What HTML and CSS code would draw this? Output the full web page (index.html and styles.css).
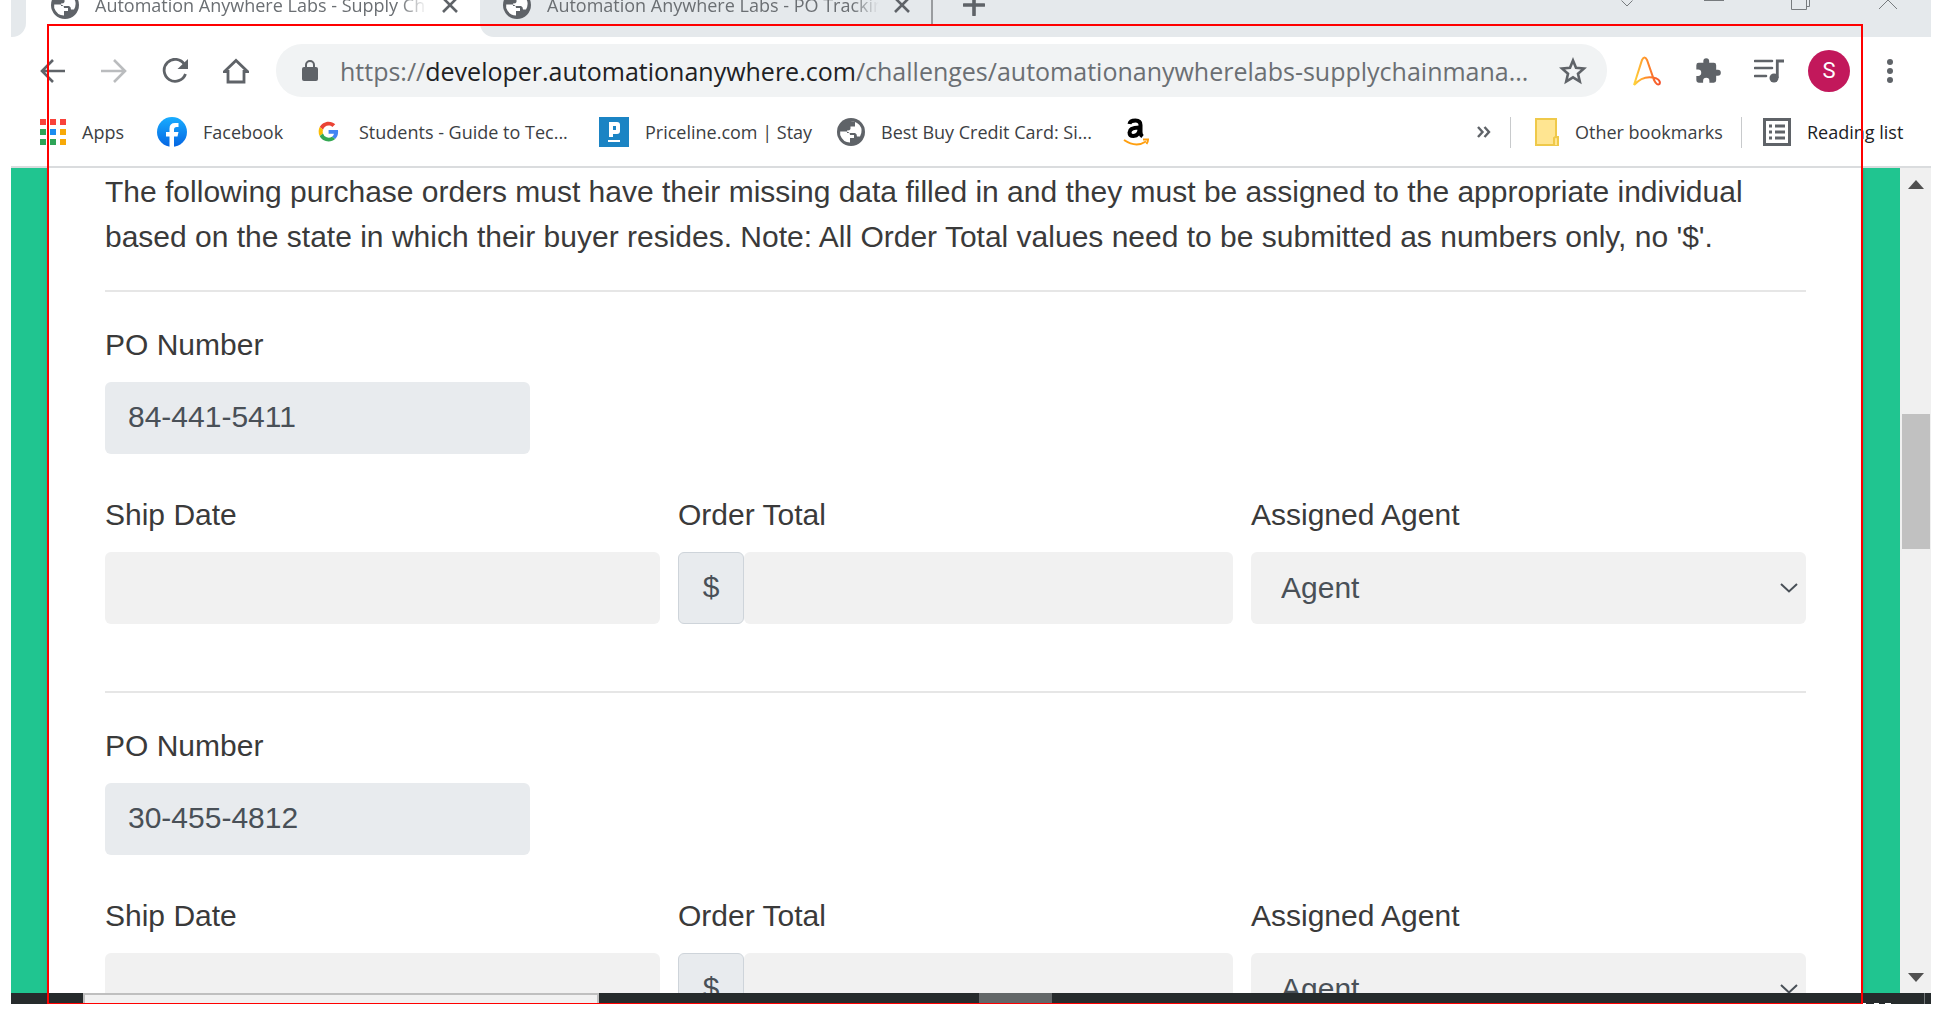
FILE: index.html
```html
<!DOCTYPE html>
<html lang="en">
<head>
<meta charset="utf-8">
<title>Automation Anywhere Labs - Supply Chain</title>
<link rel="stylesheet" href="styles.css">
</head>
<body>
<svg class="defs" aria-hidden="true">
  <symbol id="globe" viewBox="0 0 28 28"><circle cx="14" cy="14" r="14" fill="#5f6368"/><path d="M13 3.500Q8 4 5 8.500L9 9 12 12H16L18 9V7L15 6ZM3.200 13Q3 19 7 22.500 12 26 18 24L19 20Q21 16 17 15.500L16 18H12L9 15.500 3.200 13Z" fill="none"/><path d="M3.200 13.500H9Q13 13.500 13 17H17V20H13V24.500Q6 24.500 3.200 17ZM13.500 3.200 18 4V8.500H13.500V11Q13 12.500 10 12.500V15H18Q20 15.500 20 18.500H23Q26.500 12 22.500 7Q19 3 13.500 3.200Z" fill="#fff"/></symbol>
  <symbol id="cross" viewBox="0 0 16 16"><path d="M1 1 15 15M15 1 1 15" stroke="#5f6368" stroke-width="2.600" fill="none"/></symbol>
</svg>
<div class="screen">
  <header class="tabstrip">
    <div class="tabs">
      <div class="tab-edge"></div>
      <div class="tab active">
        <svg class="globe"><use href="#globe"/></svg>
        <span class="tab-title">Automation Anywhere Labs - Supply Ch</span>
        <button class="icon-btn" aria-label="Close tab"><svg width="16" height="16"><use href="#cross"/></svg></button>
      </div>
      <div class="tab">
        <svg class="globe"><use href="#globe"/></svg>
        <span class="tab-title">Automation Anywhere Labs - PO Trackin</span>
        <button class="icon-btn" aria-label="Close tab"><svg width="16" height="16"><use href="#cross"/></svg></button>
      </div>
      <button class="icon-btn new-tab" aria-label="New tab"><svg width="22" height="22" viewBox="0 0 22 22"><path d="M11 1V21M1 11H21" stroke="#5f6368" stroke-width="3.600" stroke-linecap="round"/></svg></button>
      <div class="window-controls">
        <button class="icon-btn" aria-label="Search tabs"><svg width="20" height="20" viewBox="0 0 20 20"><path d="M4.500 5.500 10 11 15.500 5.500" fill="none" stroke="#777b7e"/></svg></button>
        <button class="icon-btn" aria-label="Minimize"><svg width="20" height="20" viewBox="0 0 20 20"><path d="M0 5.500H20" stroke="#777b7e"/></svg></button>
        <button class="icon-btn" aria-label="Restore"><svg width="20" height="20" viewBox="0 0 20 20"><path d="M.5 4.500H15.500V14.500H.5ZM4.500 4V.5H18.500V11.500H15.500" fill="none" stroke="#777b7e"/></svg></button>
        <button class="icon-btn" aria-label="Close window"><svg width="20" height="20" viewBox="0 0 20 20"><path d="M1-4 19 14M19-4 1 14" stroke="#777b7e"/></svg></button>
      </div>
    </div>
  </header>

  <nav class="toolbar" aria-label="Navigation">
    <div class="nav-buttons">
      <button class="icon-btn" aria-label="Back"><svg width="26" height="26" viewBox="0 0 26 26"><path d="M25 13H3M13 2 2 13 13 24" fill="none" stroke="#5f6368" stroke-width="2.600"/></svg></button>
      <button class="icon-btn" aria-label="Forward"><svg width="26" height="26" viewBox="0 0 26 26"><path d="M0 13H23M13 2 24 13 13 24" fill="none" stroke="#babcbe" stroke-width="2.600"/></svg></button>
      <button class="icon-btn" aria-label="Reload"><svg width="26" height="26" viewBox="0 0 26 26"><path d="M22.500 6.500A11 11 0 1 0 23.500 16" fill="none" stroke="#5f6368" stroke-width="2.800"/><path d="M26 1V11H15.500Z" fill="#5f6368"/></svg></button>
      <button class="icon-btn" aria-label="Home"><svg width="26" height="26" viewBox="0 0 26 26"><path d="M1.500 13.500 13 2.500 24.500 13.500H21V24H5V13.500Z" fill="none" stroke="#5f6368" stroke-width="2.800"/></svg></button>
    </div>
    <div class="omnibox">
      <svg width="16" height="22" viewBox="0 0 16 22"><rect y="7" width="16" height="14" rx="2" fill="#5f6368"/><path d="M4 8V5A4 4 0 0 1 12 5V8" fill="none" stroke="#5f6368" stroke-width="2"/></svg>
      <div class="url">https://<b>developer.automationanywhere.com</b>/challenges/automationanywherelabs-supplychainmana...</div>
      <button class="icon-btn" aria-label="Bookmark this page"><svg width="28" height="28" viewBox="0 0 28 28"><path d="M14 3.500 17 10.800 25 11.500 19 16.700 20.800 24.500 14 20.300 7.200 24.500 9 16.700 3 11.500 11 10.800Z" fill="none" stroke="#5f6368" stroke-width="2.600"/></svg></button>
    </div>
    <div class="extensions">
      <button class="icon-btn" aria-label="Automation Anywhere"><svg width="30" height="30" viewBox="0 0 30 30"><defs><linearGradient id="flame"><stop stop-color="#ffd43a"/><stop offset=".5" stop-color="#ff8a2a"/><stop offset="1" stop-color="#f4512c"/></linearGradient></defs><path d="M2 29 10 4Q12.500-1 15 4L22 24Q25 30 27.500 28 29 25 24.500 22.500 12 18 2 29" fill="none" stroke="url(#flame)" stroke-width="2"/></svg></button>
      <button class="icon-btn" aria-label="Extensions"><svg width="28" height="28" viewBox="0 0 24 24"><path d="M20.500 11H19V7a2 2 0 0 0-2-2h-4V3.500a2.500 2.500 0 0 0-5 0V5H4a2 2 0 0 0-2 2v3.800h1.500a2.700 2.700 0 0 1 0 5.400H2V20a2 2 0 0 0 2 2h3.800v-1.500a2.700 2.700 0 0 1 5.400 0V22H17a2 2 0 0 0 2-2v-4h1.500a2.500 2.500 0 0 0 0-5Z" fill="#5f6368"/></svg></button>
      <button class="icon-btn" aria-label="Media controls"><svg width="30" height="24" viewBox="0 0 30 24"><path d="M1 2H18M1 9H18M1 17H12" stroke="#5f6368" stroke-width="2.600" stroke-linecap="round"/><circle cx="20" cy="19" r="4.500" fill="#5f6368"/><path d="M23.300 19V2H30" fill="none" stroke="#5f6368" stroke-width="2.800"/></svg></button>
      <button class="avatar" aria-label="Profile">S</button>
      <button class="icon-btn menu" aria-label="Menu"><svg width="6" height="26" viewBox="0 0 6 26"><g fill="#5f6368"><circle cx="3" cy="4" r="3"/><circle cx="3" cy="13" r="3"/><circle cx="3" cy="22" r="3"/></g></svg></button>
    </div>
  </nav>

  <nav class="bookmarks" aria-label="Bookmarks">
    <a class="bookmark" href="#"><svg width="26" height="26" viewBox="0 0 26 26"><path d="M0 0H6V6H0ZM10 0H16V6H10ZM20 0H26V6H20Z" fill="#f9423a"/><path d="M0 10H6V16H0ZM0 20H6V26H0ZM10 20H16V26H10Z" fill="#2fa457"/><path d="M10 10H16V16H10Z" fill="#1a8cf0"/><path d="M20 10H26V16H20ZM20 20H26V26H20Z" fill="#f7a908"/></svg>Apps</a>
    <a class="bookmark" href="#"><svg width="30" height="30" viewBox="0 0 30 30"><defs><linearGradient id="fb" x2="0" y2="1"><stop stop-color="#19adff"/><stop offset="1" stop-color="#0565e2"/></linearGradient></defs><circle cx="15" cy="15" r="15" fill="url(#fb)"/><path d="M12.500 30V19.500H9V15H12.500V11.500Q12.500 6 18 6H21.500V10H19.500Q17 10 17 12.500V15H21.500L20.500 19.500H17V30Z" fill="#fff"/></svg>Facebook</a>
    <a class="bookmark" href="#"><svg width="24" height="24" viewBox="-4 -4 58 58"><path fill="#ea4335" d="M24 9.500c3.500 0 6.700 1.200 9.200 3.600l6.900-6.900C35.900 2.400 30.500 0 24 0 14.600 0 6.500 5.400 2.600 13.200l8 6.200C12.400 13.700 17.700 9.500 24 9.500z"/><path fill="#4285f4" d="M47 24.500c0-1.600-.2-3.100-.4-4.500H24v9h12.900c-.6 3-2.300 5.500-4.800 7.200l7.700 6C44.400 38 47 31.800 47 24.500z"/><path fill="#fbbc05" d="M10.500 28.600a14 14 0 0 1 0-9.200l-8-6.200a24 24 0 0 0 0 21.600z"/><path fill="#34a853" d="M24 48c6.500 0 11.900-2.100 15.900-5.800l-7.700-6A14.200 14.200 0 0 1 10.500 28.600l-8 6.200C6.500 42.600 14.600 48 24 48z"/></svg>Students - Guide to Tec...</a>
    <a class="bookmark" href="#"><svg width="30" height="30" viewBox="0 0 30 30"><path fill="#1b84c4" d="M0 0H30V30H0Z"/><path fill="#fff" fill-rule="evenodd" d="M10 5H18Q21 5 21 8V14Q21 17 18 17H14V20H10ZM14 9V13H17V9ZM9 23H21V25H9Z"/></svg>Priceline.com | Stay</a>
    <a class="bookmark" href="#"><svg class="globe"><use href="#globe"/></svg>Best Buy Credit Card: Si...</a>
    <a class="bookmark" href="#" aria-label="Amazon"><svg width="26" height="28" viewBox="0 0 26 28"><path d="M6.500 6Q7 2.500 12.500 2.500 17.500 2.500 17.500 7V14Q17.500 17 19.500 18.500" fill="none" stroke="#000" stroke-width="4"/><path d="M16.500 9.500Q6.500 9.500 6.500 14.500 6.500 18 10.500 18 16.500 17.500 16.500 11" fill="none" stroke="#000" stroke-width="4"/><path d="M1 22Q13 30 23 23.500M20 21.500H25Q25 24 23.500 26" fill="none" stroke="#ff9f0f" stroke-width="2"/></svg></a>
    <button class="icon-btn overflow" aria-label="More bookmarks"><svg width="14" height="12" viewBox="0 0 14 12"><path d="M1 1 5.500 6 1 11M7.500 1 12 6 7.500 11" fill="none" stroke="#5f6368" stroke-width="2.400"/></svg></button>
    <a class="bookmark divided other" href="#"><svg width="24" height="28" viewBox="0 0 24 28"><path d="M1 1H21V19H23V27H1Z" fill="#ffe591" stroke="#efc94a" stroke-width="2"/><path d="M19 27V20Q21 18 23 20V27" fill="#ffe591" stroke="#efc94a" stroke-width="2"/></svg>Other bookmarks</a>
    <a class="bookmark divided reading" href="#"><svg width="28" height="28" viewBox="0 0 28 28"><path d="M1.500 1.500H26.500V26.500H1.500Z" fill="none" stroke="#5f6368" stroke-width="3"/><path d="M6 8H9M12 8H22M6 14H9M12 14H22M6 20H9M12 20H22" stroke="#5f6368" stroke-width="3"/></svg>Reading list</a>
  </nav>

  <div class="viewport">
    <main class="page">
      <p class="intro">The following purchase orders must have their missing data filled in and they must be assigned to the appropriate individual based on the state in which their buyer resides. Note: All Order Total values need to be submitted as numbers only, no '$'.</p>
      <section class="order">
        <div class="field po"><label for="po1">PO Number</label><input id="po1" value="84-441-5411" readonly></div>
        <div class="row">
          <div class="field"><label for="ship1">Ship Date</label><input id="ship1"></div>
          <div class="field"><label for="total1">Order Total</label><div class="money"><span>$</span><input id="total1"></div></div>
          <div class="field"><label for="agent1">Assigned Agent</label><div class="picker"><select id="agent1"><option>Agent</option></select><svg width="18" height="10" viewBox="0 0 18 10"><path d="M1 1 9 8.500 17 1" fill="none" stroke="#495057" stroke-width="2"/></svg></div></div>
        </div>
      </section>
      <section class="order">
        <div class="field po"><label for="po2">PO Number</label><input id="po2" value="30-455-4812" readonly></div>
        <div class="row">
          <div class="field"><label for="ship2">Ship Date</label><input id="ship2"></div>
          <div class="field"><label for="total2">Order Total</label><div class="money"><span>$</span><input id="total2"></div></div>
          <div class="field"><label for="agent2">Assigned Agent</label><div class="picker"><select id="agent2"><option>Agent</option></select><svg width="18" height="10" viewBox="0 0 18 10"><path d="M1 1 9 8.500 17 1" fill="none" stroke="#495057" stroke-width="2"/></svg></div></div>
        </div>
      </section>
    </main>
    <div class="scrollbar">
      <svg width="16" height="9" viewBox="0 0 16 9"><path d="M0 9 8 0 16 9Z" fill="#505050"/></svg>
      <div class="track"><div class="thumb"></div></div>
      <svg width="16" height="9" viewBox="0 0 16 9"><path d="M0 0 8 9 16 0Z" fill="#505050"/></svg>
    </div>
  </div>

  <footer class="taskbar">
    <div class="task-search"></div>
    <div class="task-active"></div>
    <div class="task-clock"><svg width="28" height="1" viewBox="0 0 28 1"><path d="M0 0H3V1H0ZM11 0H16V1H11ZM22 0H28V1H22Z" fill="#fff"/></svg></div>
  </footer>
  <div class="capture-frame"></div>
</div>
</body>
</html>
```
FILE: styles.css
```css
* { box-sizing: border-box; }
body { margin: 0; background: #fff; font-family: "Open Sans", "Noto Sans", sans-serif; color: #3c4043; overflow: hidden; }
.defs { position: absolute; width: 0; height: 0; }
svg { display: block; flex: none; }
.globe { width: 28px; height: 28px; }
.screen { position: relative; display: flex; flex-direction: column; height: calc(100vh - 25px); margin: 0 11px; }
.icon-btn { flex: none; padding: 0; border: 0; background: none; }

.tabstrip { flex: none; height: 37px; overflow: hidden; background: linear-gradient(90deg, #fff 400px, #e5e9ec 400px); }
.tabs { display: flex; align-items: center; height: 64px; margin-top: -27px; background: linear-gradient(90deg, #fff 500px, #e5e9ec 500px); }
.tab-edge { width: 15px; height: 64px; background: #e5e9ec; border-radius: 0 0 14px 0; }
.tab { display: flex; align-items: center; width: 451px; height: 64px; padding-left: 23px; background: #e5e9ec; border-radius: 0 0 0 14px; }
.tab.active { width: 454px; padding-left: 25px; background: #fff; border-radius: 0; }
.tab-title { width: 332px; margin: 0 15px 0 16px; overflow: hidden; white-space: nowrap; font-size: 18px; line-height: 24px; color: #6b6f73; -webkit-mask-image: linear-gradient(90deg, #000 305px, transparent 332px); mask-image: linear-gradient(90deg, #000 305px, transparent 332px); }
.new-tab { display: flex; align-items: center; height: 38px; padding-left: 30px; border-left: 2px solid #999c9f; }
.window-controls { display: flex; gap: 67px; margin-left: auto; padding-right: 33px; }

.toolbar { flex: none; display: flex; align-items: center; height: 69px; padding: 0 38px 2px 29px; }
.nav-buttons { display: flex; gap: 35px; }
.omnibox { flex: 1; min-width: 0; display: flex; align-items: center; height: 53px; margin: 0 25px 0 27px; padding: 0 20px 0 26px; border-radius: 26px; background: #f1f3f4; }
.url { flex: 1; min-width: 0; margin-left: 22px; overflow: hidden; white-space: nowrap; font-size: 25px; line-height: 36px; color: #6b6f73; }
.url b { font-weight: 400; color: #202124; }
.extensions { display: flex; align-items: center; gap: 32px; }
.avatar { width: 42px; height: 42px; margin-left: -8px; padding: 0; border: 0; border-radius: 50%; background: #c2185b; color: #fff; font: 22px/42px Roboto, sans-serif; }
.menu { margin-left: 5px; }

.bookmarks { flex: none; display: grid; grid-template-columns: 117px 160px 282px 238px 286px 1fr 33px 231px 179px; align-items: center; height: 62px; padding: 0 11px 8px 29px; border-bottom: 2px solid #dadcde; }
.bookmark { display: flex; align-items: center; gap: 16px; height: 31px; white-space: nowrap; font-size: 18px; line-height: 24px; color: #3c4043; text-decoration: none; }
.bookmark:nth-child(3) { gap: 18px; }
.divided { border-left: 1px solid #c8cacc; padding-left: 24px; }
.reading { padding-left: 21px; color: #202124; }

.viewport { flex: 1; min-height: 0; display: flex; overflow: hidden; background: #20c590; }
.page { flex: 1; min-width: 0; margin: 0 38px; padding: 1px 56px 0; background: #fff; font-family: "Liberation Sans", Arial, sans-serif; font-size: 30px; line-height: 45px; color: #3a3a3a; box-shadow: 0 0 5px #00000040; }
.intro { margin: 0 0 31px; }
.order { height: 401px; padding-top: 30px; border-top: 2px solid #e6e6e6; }
.field { display: flex; flex-direction: column; gap: 15px; min-width: 0; }
.po { width: 25%; margin-bottom: 38px; }
.row { display: grid; grid-template-columns: repeat(3, 1fr); gap: 18px; }
input, select { width: 100%; height: 72px; padding: 0 23px 2px; border: 0; border-radius: 6px; background: #f1f1f1; color: #495057; font: inherit; }
input[readonly] { background: #e8ebee; }
.money { display: flex; }
.money span { flex: none; width: 66px; height: 72px; border: 1px solid #ced4da; border-radius: 6px; background: #e8ebee; color: #495057; line-height: 68px; text-align: center; }
.money input { flex: 1; min-width: 0; }
.picker { display: grid; align-items: center; }
.picker select, .picker svg { grid-area: 1 / 1; }
.picker select { appearance: none; padding: 0 30px 2px; }
.picker svg { justify-self: end; margin-right: 8px; pointer-events: none; }

.scrollbar { display: flex; flex-direction: column; align-items: center; justify-content: space-between; width: 31px; padding: 12px 0 11px; background: #f0f0f0; }
.track { flex: 1; width: 28px; padding-top: 225px; }
.thumb { height: 135px; background: #c1c1c1; }

.taskbar { flex: none; display: flex; height: 11px; background: #262b2c; }
.task-search { width: 516px; margin-left: 72px; border: 2px solid #bfbfbf; border-bottom: 0; background: #f1f1f1; }
.task-active { width: 73px; margin-left: 380px; background: #636768; }
.task-clock { display: flex; align-items: flex-end; width: 62px; margin: 0 6px 0 auto; border-right: 1px solid #73787a; }
.capture-frame { position: absolute; inset: 24px 68px 0 36px; border: 2px solid #f00; border-bottom-width: 1px; pointer-events: none; }
```
